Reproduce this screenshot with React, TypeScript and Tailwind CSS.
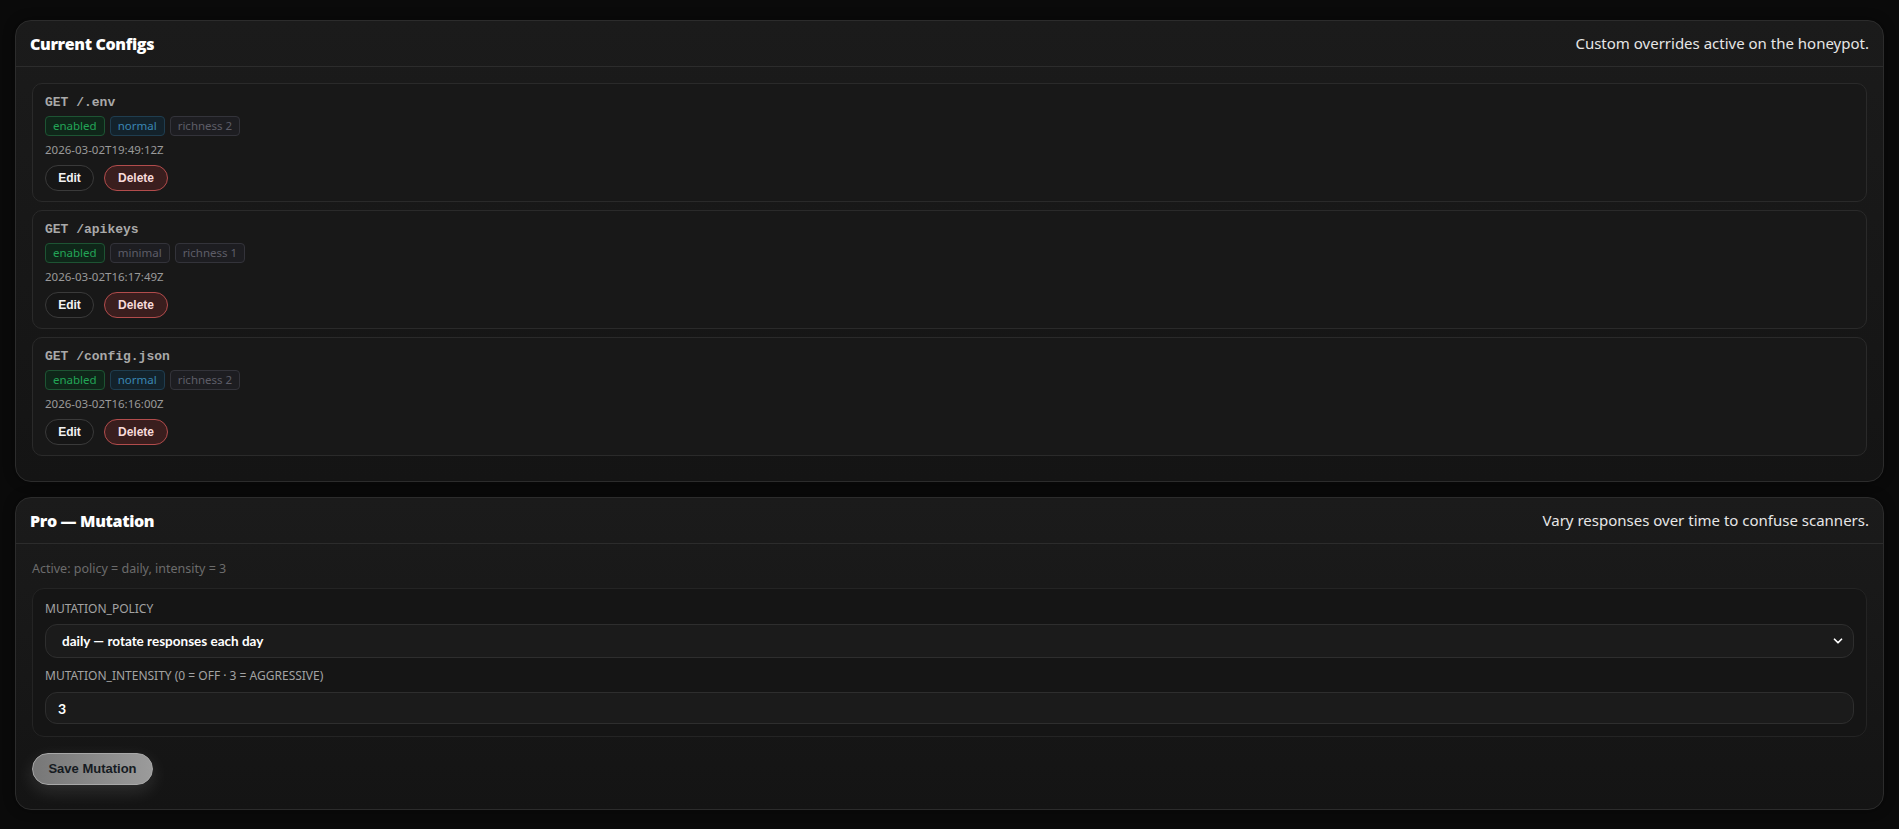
import { ChevronDown } from "lucide-react";

type Badge = { label: string; tone: "green" | "blue" | "gray" };

type ConfigItem = {
  route: string;
  badges: Badge[];
  updated: string;
};

const configs: ConfigItem[] = [
  {
    route: "GET /.env",
    badges: [
      { label: "enabled", tone: "green" },
      { label: "normal", tone: "blue" },
      { label: "richness 2", tone: "gray" },
    ],
    updated: "2026-03-02T19:49:12Z",
  },
  {
    route: "GET /apikeys",
    badges: [
      { label: "enabled", tone: "green" },
      { label: "minimal", tone: "gray" },
      { label: "richness 1", tone: "gray" },
    ],
    updated: "2026-03-02T16:17:49Z",
  },
  {
    route: "GET /config.json",
    badges: [
      { label: "enabled", tone: "green" },
      { label: "normal", tone: "blue" },
      { label: "richness 2", tone: "gray" },
    ],
    updated: "2026-03-02T16:16:00Z",
  },
];

const toneClass = {
  green: "bg-[#0f2619] border-[#1d5433] text-[#23a557]",
  blue: "bg-[#13222b] border-[#1f3d4f] text-[#3a86b4]",
  gray: "bg-[#1d1d21] border-[#33333a] text-[#5d5d68]",
};

const Panel = ({
  title,
  description,
  children,
}: {
  title: string;
  description: string;
  children: React.ReactNode;
}) => (
  <section className="rounded-2xl border border-[#2c2c2c] bg-gradient-to-b from-[#1b1b1b] to-[#141414] shadow-[0_0_12px_rgba(0,0,0,0.4)]">
    <header className="flex h-[46px] items-center justify-between border-b border-[#2c2c2c] px-3.5">
      <h2 className="font-['Open_Sans',sans-serif] text-[16px] font-extrabold tracking-[-0.35px] text-white">
        {title}
      </h2>
      <p className="font-['Noto_Sans',sans-serif] text-[15px] text-[#e6e6e6]">{description}</p>
    </header>
    {children}
  </section>
);

const ConfigCard = ({ item }: { item: ConfigItem }) => (
  <div className="rounded-[10px] border border-[#2a2a2a] bg-[#181818] px-3 pt-2.5 pb-2.5">
    <div className="font-['Liberation_Mono',monospace] text-[13px] leading-[18px] font-bold text-[#a9a9a9]">
      {item.route}
    </div>
    <div className="mt-1 flex gap-[5px]">
      {item.badges.map((b) => (
        <span
          key={b.label}
          className={`flex h-5 items-center rounded border px-[7px] font-['Noto_Sans',sans-serif] text-[11.5px] ${toneClass[b.tone]}`}
        >
          {b.label}
        </span>
      ))}
    </div>
    <div className="mt-1.5 font-['Noto_Sans',sans-serif] text-[11.5px] leading-4 text-[#9a9a9a]">
      {item.updated}
    </div>
    <div className="mt-[7px] flex gap-[10px] font-['Liberation_Sans',sans-serif] text-[12px] font-bold">
      <button className="h-[26px] w-[49px] rounded-full border border-[#3a3a3a] bg-[#161616] text-[#f2f2f2]">
        Edit
      </button>
      <button className="h-[26px] w-[64px] rounded-full border border-[#b24c4c] bg-[#3a1e1e] text-[#f7dada]">
        Delete
      </button>
    </div>
  </div>
);

export default function App() {
  return (
    <div className="min-h-screen bg-[#0a0a0a] px-[15px] pt-5 pb-5">
      <div className="flex flex-col gap-[15px]">
        <Panel title="Current Configs" description="Custom overrides active on the honeypot.">
          <div className="flex flex-col gap-[8px] px-4 pt-4 pb-[25px]">
            {configs.map((c) => (
              <ConfigCard key={c.route} item={c} />
            ))}
          </div>
        </Panel>

        <Panel title="Pro — Mutation" description="Vary responses over time to confuse scanners.">
          <div className="px-4 pt-[17px] pb-6 font-['Noto_Sans',sans-serif]">
            <p className="text-[12.5px] leading-4 text-[#6c6c6c]">
              Active: policy = daily, intensity = 3
            </p>
            <div className="mt-[11px] rounded-xl border border-[#242424] bg-[#151515] px-3 pt-3 pb-3">
              <label className="block text-[12px] leading-4 uppercase text-[#a3a3a3]">
                MUTATION_POLICY
              </label>
              <div className="relative mt-[7px]">
                <select className="h-[34px] w-full appearance-none rounded-xl border border-[#2e2e2e] bg-[#1b1b1b] pl-4 font-['Lato',sans-serif] text-[13.5px] font-bold text-white outline-none">
                  <option>daily — rotate responses each day</option>
                </select>
                <ChevronDown
                  className="pointer-events-none absolute top-1/2 right-[9px] -translate-y-1/2 text-white"
                  size={14}
                  strokeWidth={3}
                />
              </div>
              <label className="mt-[10px] block text-[12px] leading-4 uppercase text-[#a3a3a3]">
                MUTATION_INTENSITY (0 = off · 3 = aggressive)
              </label>
              <input
                readOnly
                value="3"
                className="mt-2 block h-[32px] w-full rounded-xl border border-[#2e2e2e] bg-[#1b1b1b] px-3 font-['Lato',sans-serif] text-[14px] font-bold text-white outline-none"
              />
            </div>
            <button className="mt-4 h-8 w-[121px] rounded-full border border-[#a8a8a8] bg-gradient-to-r from-[#777777] to-[#9b9b9b] font-['Liberation_Sans',sans-serif] text-[13px] font-bold text-[#161b22] shadow-[0_6px_18px_rgba(255,255,255,0.12)]">
              Save Mutation
            </button>
          </div>
        </Panel>
      </div>
    </div>
  );
}
